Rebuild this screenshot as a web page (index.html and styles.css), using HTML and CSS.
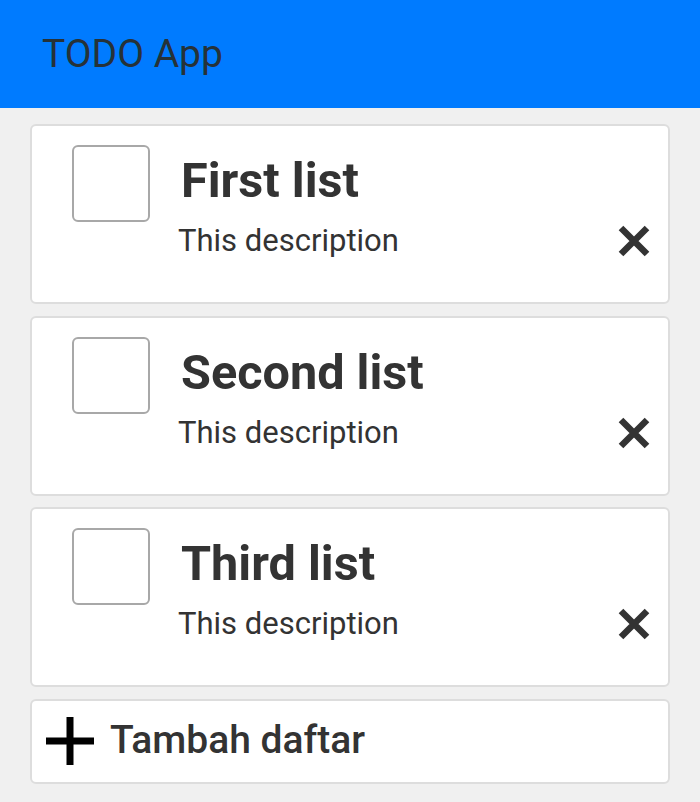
FILE: index.html
```html
<!DOCTYPE html>
<html>
<head>
<meta charset="utf-8">
<link rel="stylesheet" href="styles.css">
</head>
<body>
<header class="appbar"><h1 class="app-title">TODO App</h1></header>
<main class="list">
  <div class="card">
    <div class="check"></div>
    <div class="body">
      <div class="title">First list</div>
      <div class="desc">This description</div>
    </div>
    <svg class="del" viewBox="0 0 32 32"><path d="M3 3L29 29M29 3L3 29" stroke="#333" stroke-width="6.5"/></svg>
  </div>
  <div class="card">
    <div class="check"></div>
    <div class="body">
      <div class="title">Second list</div>
      <div class="desc">This description</div>
    </div>
    <svg class="del" viewBox="0 0 32 32"><path d="M3 3L29 29M29 3L3 29" stroke="#333" stroke-width="6.5"/></svg>
  </div>
  <div class="card">
    <div class="check"></div>
    <div class="body">
      <div class="title">Third list</div>
      <div class="desc">This description</div>
    </div>
    <svg class="del" viewBox="0 0 32 32"><path d="M3 3L29 29M29 3L3 29" stroke="#333" stroke-width="6.5"/></svg>
  </div>
  <div class="add">
    <svg class="plus" viewBox="0 0 48 48"><path d="M24 0V48M0 24H48" stroke="#000" stroke-width="7"/></svg>
    <span class="add-text">Tambah daftar</span>
  </div>
</main>
</body>
</html>
```
FILE: styles.css
```css
* { box-sizing: border-box; }
html, body { margin: 0; padding: 0; }
body {
  background: #f0f0f0;
  font-family: Roboto, "Noto Sans", sans-serif;
  width: 700px;
  height: 802px;
  overflow: hidden;
}
.appbar {
  background: #007bff;
  height: 108px;
  display: flex;
  align-items: center;
  padding-left: 42px;
}
.app-title {
  margin: 0;
  font-size: 39px;
  font-weight: 400;
  color: #263238;
}
.list {
  padding: 16px 30px 0;
  display: flex;
  flex-direction: column;
  gap: 11.5px;
}
.card {
  background: #fff;
  border: 2px solid #ddd;
  border-radius: 6px;
  height: 180px;
  display: flex;
  align-items: flex-start;
  padding: 19px 18px 0 40px;
}
.check {
  width: 78px;
  height: 77px;
  border: 2px solid #a8a8a8;
  border-radius: 6px;
  flex: none;
}
.body {
  margin-left: 30px;
  flex: 1;
}
.title {
  font-size: 48.6px;
  font-weight: 700;
  color: #333;
  line-height: 48px;
  margin-top: 12px;
  margin-left: 1px;
}
.desc {
  font-size: 31px;
  color: #333;
  line-height: 36px;
  margin-top: 18px;
  margin-left: -2px;
}
.del {
  width: 32px;
  height: 32px;
  margin-top: 80px;
  flex: none;
}
.add {
  background: #fff;
  border: 2px solid #ddd;
  border-radius: 6px;
  height: 85px;
  display: flex;
  align-items: center;
  padding-left: 14px;
}
.plus {
  width: 48px;
  height: 48px;
  flex: none;
}
.add-text {
  margin-left: 16px;
  font-size: 39px;
  font-weight: 500;
  color: #333;
  margin-top: -3px;
}
```
